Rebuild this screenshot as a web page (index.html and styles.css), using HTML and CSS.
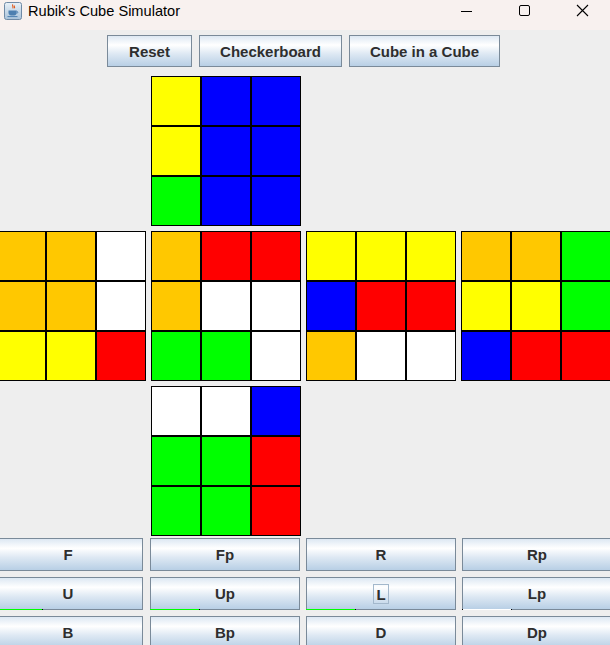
FILE: index.html
```html
<!DOCTYPE html>
<html>
<head>
<meta charset="utf-8">
<link rel="stylesheet" href="styles.css">
</head>
<body>
<div class="window">
  <div class="titlebar">
    <svg class="appicon" width="18" height="18" viewBox="0 0 18 18">
      <defs>
        <linearGradient id="ig" x1="0" y1="0" x2="0" y2="1">
          <stop offset="0" stop-color="#e9f1f8"/>
          <stop offset="1" stop-color="#a9c2da"/>
        </linearGradient>
      </defs>
      <rect x="0.5" y="0.5" width="17" height="17" rx="2" fill="url(#ig)" stroke="#6f8aa6"/>
      <path d="M9 2.5c-1.5 1.3 1 2.2-0.3 3.8M10.6 3.6c-1 0.9 0.6 1.4-0.2 2.6" stroke="#e2591b" stroke-width="1.1" fill="none"/>
      <path d="M4.5 8.5h8.2v2.4c0 1.6-1.6 2.6-4.1 2.6s-4.1-1-4.1-2.6z" fill="#4d7fb0"/>
      <path d="M12.7 9.3c1.5 0 1.5 2 0 2" stroke="#4d7fb0" stroke-width="0.9" fill="none"/>
      <path d="M3.5 14.6h10" stroke="#4d7fb0" stroke-width="1"/>
    </svg>
    <span class="title">Rubik's Cube Simulator</span>
    <div class="controls">
      <svg class="ctl" width="14" height="14" viewBox="0 0 14 14"><path d="M1 7.5h11" stroke="#000" stroke-width="1"/></svg>
      <svg class="ctl" width="14" height="14" viewBox="0 0 14 14"><rect x="1.5" y="1.5" width="10" height="10" rx="1.5" fill="none" stroke="#000" stroke-width="1"/></svg>
      <svg class="ctl" width="14" height="14" viewBox="0 0 14 14"><path d="M1 1l11 11M12 1L1 12" stroke="#000" stroke-width="1.1"/></svg>
    </div>
  </div>
  <div class="content">
    <div class="toppanel">
      <button class="btn top w-reset">Reset</button>
      <button class="btn top w-check">Checkerboard</button>
      <button class="btn top w-cube">Cube in a Cube</button>
    </div>
    <div class="cube">
      <div class="face up">
        <div class="c y"></div><div class="c b"></div><div class="c b"></div>
        <div class="c y"></div><div class="c b"></div><div class="c b"></div>
        <div class="c g"></div><div class="c b"></div><div class="c b"></div>
      </div>
      <div class="face left">
        <div class="c o"></div><div class="c o"></div><div class="c w"></div>
        <div class="c o"></div><div class="c o"></div><div class="c w"></div>
        <div class="c y"></div><div class="c y"></div><div class="c r"></div>
      </div>
      <div class="face front">
        <div class="c o"></div><div class="c r"></div><div class="c r"></div>
        <div class="c o"></div><div class="c w"></div><div class="c w"></div>
        <div class="c g"></div><div class="c g"></div><div class="c w"></div>
      </div>
      <div class="face right">
        <div class="c y"></div><div class="c y"></div><div class="c y"></div>
        <div class="c b"></div><div class="c r"></div><div class="c r"></div>
        <div class="c o"></div><div class="c w"></div><div class="c w"></div>
      </div>
      <div class="face back">
        <div class="c o"></div><div class="c o"></div><div class="c g"></div>
        <div class="c y"></div><div class="c y"></div><div class="c g"></div>
        <div class="c b"></div><div class="c r"></div><div class="c r"></div>
      </div>
      <div class="face down">
        <div class="c w"></div><div class="c w"></div><div class="c b"></div>
        <div class="c g"></div><div class="c g"></div><div class="c r"></div>
        <div class="c g"></div><div class="c g"></div><div class="c r"></div>
      </div>
    </div>
    <div class="moves">
      <button class="btn mv">F</button>
      <button class="btn mv">Fp</button>
      <button class="btn mv">R</button>
      <button class="btn mv">Rp</button>
      <button class="btn mv">U<span class="glitch green"></span></button>
      <button class="btn mv">Up<span class="glitch green"></span></button>
      <button class="btn mv"><span class="focus">L</span><span class="glitch green"></span></button>
      <button class="btn mv">Lp<span class="glitch white"></span></button>
      <button class="btn mv">B</button>
      <button class="btn mv">Bp</button>
      <button class="btn mv">D</button>
      <button class="btn mv">Dp</button>
    </div>
  </div>
</div>
</body>
</html>
```

FILE: styles.css
```css
html, body {
  margin: 0;
  padding: 0;
  width: 610px;
  height: 645px;
  overflow: hidden;
  background: #eeeeee;
}

.window {
  width: 610px;
  height: 645px;
  overflow: hidden;
  display: flex;
  flex-direction: column;
}

.titlebar {
  height: 30px;
  flex: none;
  background: #f8f1ef;
  display: flex;
  align-items: center;
  box-sizing: border-box;
  padding-bottom: 9px;
  padding-left: 4px;
  position: relative;
}

.appicon {
  flex: none;
  margin-top: 1px;
}

.title {
  font-family: "Liberation Sans", Arial, sans-serif;
  font-size: 14.6px;
  color: #000;
  margin-left: 6px;
  margin-top: 1px;
}

.controls {
  margin-left: auto;
  display: flex;
  align-items: center;
  gap: 44px;
  margin-right: 20px;
  margin-top: 1px;
}

.ctl {
  display: block;
}

.content {
  flex: 1;
  background: #eeeeee;
  display: flex;
  flex-direction: column;
}

.toppanel {
  display: flex;
  justify-content: center;
  gap: 7px;
  padding-top: 5px;
  margin-left: -3px;
}

.btn {
  font-family: "Liberation Sans", Arial, sans-serif;
  font-weight: bold;
  font-size: 15px;
  color: #2e2e2e;
  border: 1px solid #7a8a99;
  border-radius: 0;
  margin: 0;
  box-sizing: border-box;
  background: linear-gradient(to bottom, #dde8f3 0%, #ffffff 30%, #dde8f3 60%, #b8cfe5 100%);
  position: relative;
  display: flex;
  align-items: center;
  justify-content: center;
}

.btn.top {
  height: 32px;
  padding: 0;
}

.w-reset { width: 85px; }
.w-check { width: 143px; }
.w-cube { width: 151px; }

.cube {
  margin-top: 9px;
  margin-left: -4px;
  display: grid;
  grid-template-columns: repeat(4, 150px);
  grid-template-rows: repeat(3, 150px);
  gap: 5px;
}

.face {
  display: grid;
  grid-template-columns: repeat(3, 50px);
  grid-template-rows: repeat(3, 50px);
}

.face.up { grid-column: 2; grid-row: 1; }
.face.left { grid-column: 1; grid-row: 2; }
.face.front { grid-column: 2; grid-row: 2; }
.face.right { grid-column: 3; grid-row: 2; }
.face.back { grid-column: 4; grid-row: 2; }
.face.down { grid-column: 2; grid-row: 3; }

.c {
  box-sizing: border-box;
  border: 1px solid #000;
}

.y { background: #ffff00; }
.b { background: #0000ff; }
.g { background: #00ff00; }
.o { background: #ffc800; }
.r { background: #ff0000; }
.w { background: #ffffff; }

.moves {
  margin-top: 2px;
  margin-left: -7px;
  display: grid;
  grid-template-columns: 157px 156px 156px 150px;
  grid-auto-rows: 33px;
  column-gap: 0;
  row-gap: 6px;
}

.btn.mv {
  width: 150px;
  height: 33px;
  padding: 0;
}

.focus {
  border: 1px solid #a3b8cc;
  padding: 1px 2px 0 2px;
  line-height: 17px;
}

.glitch {
  position: absolute;
  left: -1px;
  bottom: -1px;
  width: 49px;
  height: 1px;
  border-right: 1px solid #000;
}

.glitch.green { background: #00ff00; }
.glitch.white { background: #ffffff; border-left: 1px solid #000; width: 48px; }
```
